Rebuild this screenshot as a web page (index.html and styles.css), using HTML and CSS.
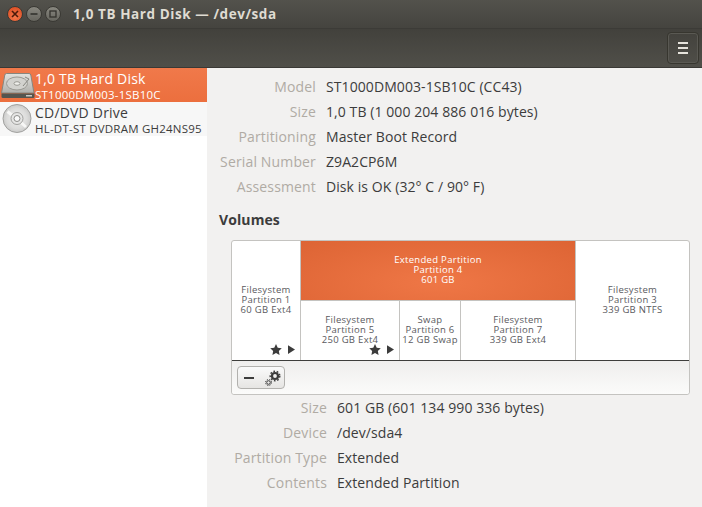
FILE: index.html
```html
<!DOCTYPE html>
<html lang="en">
<head>
<meta charset="utf-8">
<title>1,0 TB Hard Disk — /dev/sda</title>
<link rel="stylesheet" href="styles.css">
</head>
<body>
<div class="window">
  <header class="titlebar">
    <div class="wm-buttons">
      <span class="wm close"><svg width="8" height="8" viewBox="0 0 8 8"><path d="M1 1l6 6M7 1L1 7" stroke="#4a1a0a" stroke-width="1.6"/></svg></span>
      <span class="wm"><svg width="8" height="8" viewBox="0 0 8 8"><path d="M0.5 4h7" stroke="#33322d" stroke-width="1.6"/></svg></span>
      <span class="wm"><svg width="8" height="8" viewBox="0 0 8 8"><rect x="1" y="1" width="6" height="6" fill="none" stroke="#33322d" stroke-width="1.3"/></svg></span>
    </div>
    <span class="title">1,0 TB Hard Disk — /dev/sda</span>
  </header>
  <div class="toolbar">
    <button class="menu-btn" aria-label="Menu"><span></span><span></span><span></span></button>
  </div>
  <div class="main">
    <aside class="sidebar">
      <div class="drive selected">
        <svg class="drive-icon" width="34" height="32" viewBox="0 0 34 32">
          <defs>
            <linearGradient id="hd" x1="0" y1="0" x2="0" y2="1"><stop offset="0" stop-color="#e2e2de"/><stop offset="1" stop-color="#b0b0ac"/></linearGradient>
          </defs>
          <path d="M5.500 4.500h22.500q1.500 0 1.800 1.500l3.200 18H.5L3.800 6q.3-1.500 1.700-1.500z" fill="url(#hd)" stroke="#86867f"/>
          <ellipse cx="16" cy="14.500" rx="10.500" ry="6.500" fill="#d2d2ce" stroke="#9a9a94"/>
          <ellipse cx="16" cy="14.500" rx="3" ry="1.800" fill="#efefeb" stroke="#9a9a94"/>
          <path d="M24 8l4 2-6 7" fill="none" stroke="#86867f"/>
          <path d="M.5 24.500h33v3q0 1.500-1.500 1.500H2q-1.500 0-1.500-1.500z" fill="#55554f"/>
          <rect x="25" y="26" width="6" height="1.500" fill="#c9c9c4"/>
        </svg>
        <div class="drive-text">
          <div class="drive-name">1,0 TB Hard Disk</div>
          <div class="drive-model">ST1000DM003-1SB10C</div>
        </div>
      </div>
      <div class="drive">
        <svg class="drive-icon" width="34" height="32" viewBox="0 0 34 32">
          <defs>
            <radialGradient id="cd" cx="0.5" cy="0.5" r="0.55"><stop offset="0" stop-color="#f0f0ef"/><stop offset="0.65" stop-color="#dcdcdb"/><stop offset="1" stop-color="#c4c4c3"/></radialGradient>
          </defs>
          <circle cx="16" cy="15.500" r="14" fill="url(#cd)" stroke="#a2a2a0"/>
          <path d="M6.500 8.500L12 13M25 24l-5-4.500" stroke="#f7f7f6" stroke-width="3"/>
          <circle cx="16" cy="15.500" r="6" fill="#e6e6e5" stroke="#a2a2a0"/>
          <circle cx="16" cy="15.500" r="3" fill="#fafafa" stroke="#8e8e8c"/>
        </svg>
        <div class="drive-text">
          <div class="drive-name">CD/DVD Drive</div>
          <div class="drive-model">HL-DT-ST DVDRAM GH24NS95</div>
        </div>
      </div>
    </aside>
    <section class="content">
      <dl class="props disk-props">
        <dt>Model</dt><dd>ST1000DM003-1SB10C (CC43)</dd>
        <dt>Size</dt><dd>1,0 TB (1 000 204 886 016 bytes)</dd>
        <dt>Partitioning</dt><dd>Master Boot Record</dd>
        <dt>Serial Number</dt><dd>Z9A2CP6M</dd>
        <dt>Assessment</dt><dd>Disk is OK (32° C / 90° F)</dd>
      </dl>
      <h2 class="volumes">Volumes</h2>
      <div class="chart">
        <div class="chart-grid">
          <div class="part part-1">
            <span>Filesystem<br>Partition 1<br>60 GB Ext4</span>
            <span class="marks"><svg width="12" height="11" viewBox="0 0 13 12"><path d="M6.500 0l1.900 4 4.400.5-3.200 3 .8 4.400-3.900-2.100-3.900 2.100.8-4.400L.2 4.500l4.400-.5z" fill="#3c3c3c"/></svg><svg width="7" height="9" viewBox="0 0 8 10"><path d="M0 0l8 5-8 5z" fill="#3c3c3c"/></svg></span>
          </div>
          <div class="ext">
            <div class="part ext-head">Extended Partition<br>Partition 4<br>601 GB</div>
            <div class="logical">
              <div class="part part-5">
                <span>Filesystem<br>Partition 5<br>250 GB Ext4</span>
                <span class="marks"><svg width="12" height="11" viewBox="0 0 13 12"><path d="M6.500 0l1.900 4 4.400.5-3.200 3 .8 4.400-3.900-2.100-3.900 2.100.8-4.400L.2 4.500l4.400-.5z" fill="#3c3c3c"/></svg><svg width="7" height="9" viewBox="0 0 8 10"><path d="M0 0l8 5-8 5z" fill="#3c3c3c"/></svg></span>
              </div>
              <div class="part part-6">Swap<br>Partition 6<br>12 GB Swap</div>
              <div class="part part-7">Filesystem<br>Partition 7<br>339 GB Ext4</div>
            </div>
          </div>
          <div class="part part-3">Filesystem<br>Partition 3<br>339 GB NTFS</div>
        </div>
        <div class="chart-tools">
          <button class="tool-btn" aria-label="Volume actions">
            <svg width="12" height="2" viewBox="0 0 12 2"><rect width="10" height="2" fill="#3c3c3c"/></svg>
            <svg width="16" height="16" viewBox="0 0 16 16"><g fill="none" stroke="#3c3c3c"><circle cx="10" cy="6" r="3" stroke-width="2.200"/><circle cx="10" cy="6" r="4.800" stroke-width="1.400" stroke-dasharray="1.700 1.700"/><circle cx="3.500" cy="12.500" r="1.800" stroke-width="1"/><circle cx="3.500" cy="12.500" r="3" stroke-width="1" stroke-dasharray="1.200 1.200"/></g></svg>
          </button>
        </div>
      </div>
      <dl class="props vol-props">
        <dt>Size</dt><dd>601 GB (601 134 990 336 bytes)</dd>
        <dt>Device</dt><dd>/dev/sda4</dd>
        <dt>Partition Type</dt><dd>Extended</dd>
        <dt>Contents</dt><dd>Extended Partition</dd>
      </dl>
    </section>
  </div>
</div>
</body>
</html>
```
FILE: styles.css
```css
* { box-sizing: border-box; }
html, body { margin: 0; height: 100%; }
body { font-family: "Open Sans", "Noto Sans", sans-serif; color: #3c3c3c; overflow: hidden; }
.window { display: flex; flex-direction: column; width: 702px; height: 507px; background: #f2f1f0; }

.titlebar { height: 28px; display: flex; align-items: center; gap: 12px; padding-left: 7px; background: linear-gradient(#53524c, #45443f); }
.wm-buttons { display: flex; gap: 3px; }
.wm { width: 16px; height: 16px; border-radius: 50%; display: flex; align-items: center; justify-content: center; background: linear-gradient(#88877f, #66655e); border: 1px solid #3a3934; }
.wm.close { background: radial-gradient(circle at 50% 70%, #f2774a, #d9481e); }
.title { font-size: 13.5px; font-weight: 700; color: #dfdbd2; letter-spacing: 0.57px; }

.toolbar { height: 40px; display: flex; align-items: center; justify-content: flex-end; padding: 3px 3px 3px 0; background: linear-gradient(#42413c, #504f49); border-top: 1px solid #3c3b37; border-bottom: 1px solid #3a3935; }
.menu-btn { width: 32px; height: 32px; padding: 0; display: flex; flex-direction: column; align-items: center; justify-content: center; gap: 3px; background: transparent; border: 1px solid #37362f; border-radius: 4px; box-shadow: inset 0 0 0 1px #5a5953; }
.menu-btn span { width: 10px; height: 2px; background: #e6e3dc; }

.main { flex: 1; display: flex; min-height: 0; }
.sidebar { width: 207px; flex: none; background: #fff; }
.drive { height: 34px; display: flex; align-items: center; padding-left: 1px; color: #3c3c3c; background: #f7f7f7; }
.drive.selected { background: linear-gradient(#f0794a, #ec6f3e); color: #fff; }
.drive-icon { flex: none; }
.drive-text { display: flex; flex-direction: column; }
.drive-name { font-size: 14px; line-height: 18px; letter-spacing: 0.2px; padding-top: 1px; }
.drive-model { font-size: 11.5px; line-height: 13px; letter-spacing: 0.22px; }

.content { flex: 1; min-width: 0; padding: 6px 12px 0; display: flex; flex-direction: column; }
.props { display: grid; column-gap: 10px; margin: 0; font-size: 14px; line-height: 25px; letter-spacing: 0.15px; }
.disk-props { grid-template-columns: 97px 1fr; }
.vol-props { grid-template-columns: 108px 1fr; }
.props dt { text-align: right; color: #b0aba4; }
.props dd { margin: 0; color: #3c3c3c; letter-spacing: 0.08px; }
.volumes { margin: 12px 0 11px; font-size: 14px; line-height: 18px; font-weight: 700; color: #3c3c3c; letter-spacing: 0.1px; }

.chart { margin-left: 12px; width: 459px; height: 155px; flex: none; display: flex; flex-direction: column; border: 1px solid #c4c3c0; border-radius: 3px; background: #fff; }
.chart-grid { height: 120px; display: grid; grid-template-columns: 69px 274px 1fr; border-bottom: 1px solid #3e3e3c; }
.part { display: flex; flex-direction: column; justify-content: center; align-items: center; text-align: center; font-size: 9.5px; line-height: 10px; color: #5a5a5e; letter-spacing: 0.3px; padding-bottom: 2px; position: relative; }
.part > span:first-child { display: block; }
.part-1 { border-right: 1px solid #c4c3c0; }
.ext { display: grid; grid-template-rows: 60px 1fr; }
.ext-head { display: block; padding-top: 14px; color: #fff; background: radial-gradient(ellipse at 50% 70%, #ef7746, #dd6434); border-bottom: 1px solid #c4c3c0; }
.logical { display: grid; grid-template-columns: 99px 61px 1fr; }
.part-5, .part-6 { border-right: 1px solid #c4c3c0; }
.part-3 { border-left: 1px solid #c4c3c0; }
.marks { position: absolute; right: 5px; bottom: 5px; display: flex; align-items: center; gap: 6px; }

.chart-tools { flex: 1; padding: 5px 5px; background: linear-gradient(#efeeed, #fbfbfa); border-radius: 0 0 3px 3px; }
.tool-btn { width: 48px; height: 23px; padding: 0 3px 0 6px; display: flex; align-items: center; justify-content: space-between; background: linear-gradient(#fafafa, #e6e5e3); border: 1px solid #b2b1ae; border-radius: 4px; }
```
